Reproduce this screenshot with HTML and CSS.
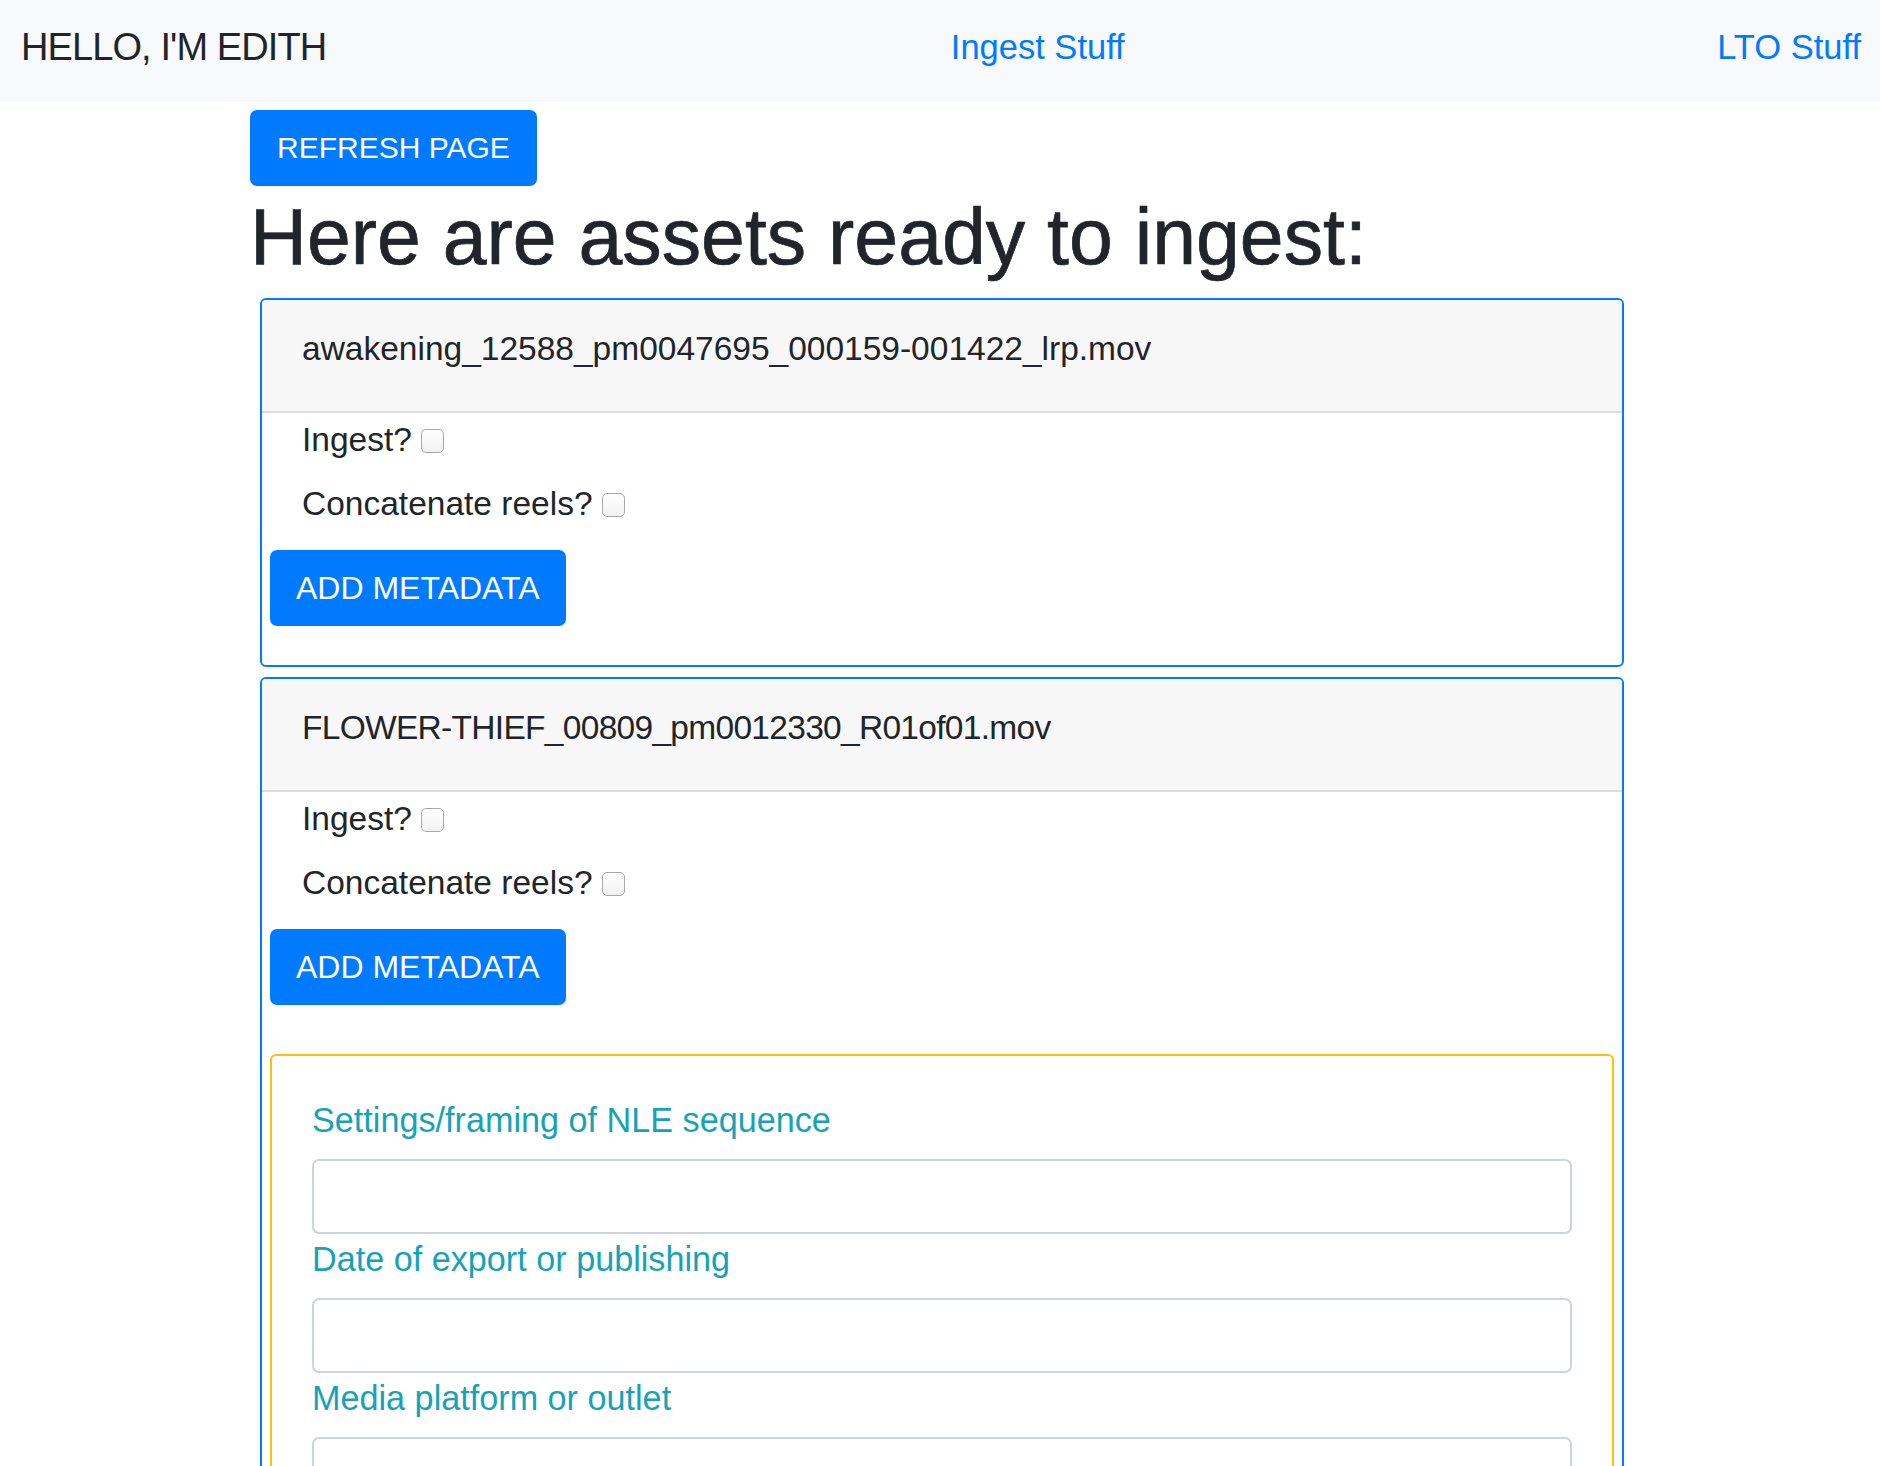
FILE: index.html
```html
<!DOCTYPE html>
<html lang="en">
<head>
<meta charset="utf-8">
<title>Edith</title>
<link rel="stylesheet" href="styles.css">
</head>
<body>
<nav class="navbar">
  <span class="brand">HELLO, I'M EDITH</span>
  <a class="nav-link nav-mid" href="#">Ingest Stuff</a>
  <a class="nav-link" href="#">LTO Stuff</a>
</nav>
<main class="container">
  <button class="btn">REFRESH PAGE</button>
  <h1 class="title">Here are assets ready to ingest:</h1>

  <section class="card">
    <div class="card-header">awakening_12588_pm0047695_000159-001422_lrp.mov</div>
    <div class="card-body">
      <label class="check-row">Ingest? <input type="checkbox" class="check"></label>
      <label class="check-row">Concatenate reels? <input type="checkbox" class="check"></label>
      <button class="btn btn-meta">ADD METADATA</button>
    </div>
  </section>

  <section class="card">
    <div class="card-header caps">FLOWER-THIEF_00809_pm0012330_R01of01.mov</div>
    <div class="card-body">
      <label class="check-row">Ingest? <input type="checkbox" class="check"></label>
      <label class="check-row">Concatenate reels? <input type="checkbox" class="check"></label>
      <button class="btn btn-meta">ADD METADATA</button>
      <div class="meta-card">
        <label class="field-label">Settings/framing of NLE sequence</label>
        <input type="text" class="field">
        <label class="field-label">Date of export or publishing</label>
        <input type="text" class="field">
        <label class="field-label">Media platform or outlet</label>
        <input type="text" class="field">
      </div>
    </div>
  </section>
</main>
</body>
</html>
```

FILE: styles.css
```css
* { box-sizing: border-box; }

html, body {
  margin: 0;
  padding: 0;
  background: #ffffff;
}

body {
  font-family: "Liberation Sans", Arial, sans-serif;
  font-size: 33.5px;
  line-height: 50px;
  color: #212529;
}

.navbar {
  height: 102px;
  background: #f8f9fa;
  display: flex;
  align-items: center;
  justify-content: space-between;
  padding: 0 19px 8px 21px;
}

.brand {
  font-size: 38px;
  letter-spacing: -0.9px;
  color: #212529;
  line-height: 50px;
}

.nav-link {
  font-size: 34.5px;
  color: #007bff;
  text-decoration: none;
  line-height: 50px;
}

.nav-mid {
  margin-left: 32px;
}

.container {
  width: 1380px;
  margin: 0 auto;
}

.btn {
  display: inline-flex;
  align-items: center;
  justify-content: center;
  height: 76px;
  padding: 0 27px;
  margin-top: 8px;
  border: none;
  border-radius: 7px;
  background: #007bff;
  color: #ffffff;
  font-family: "Liberation Sans", Arial, sans-serif;
  font-size: 30px;
  line-height: 1;
  cursor: pointer;
}

.title {
  margin: 4px 0 13px;
  font-size: 78.8px;
  line-height: 95px;
  font-weight: 400;
  -webkit-text-stroke: 0.7px #212529;
  color: #212529;
}

.card {
  margin: 0 6px 10px 10px;
  border: 2px solid #007bff;
  border-radius: 6px;
  overflow: hidden;
}

.card-header {
  background: #f7f7f7;
  padding: 24px 40px 37px;
  border-bottom: 2px solid #dcdcdc;
  line-height: 50px;
}

.card-header.caps {
  letter-spacing: -0.7px;
}

.card-body {
  padding: 2px 8px 39px;
  display: flex;
  flex-direction: column;
  align-items: flex-start;
}

.check-row {
  display: flex;
  align-items: center;
  gap: 9px;
  padding-left: 32px;
  line-height: 50px;
}

.check-row + .check-row {
  margin-top: 14px;
}

.check {
  -webkit-appearance: none;
  appearance: none;
  width: 23px;
  height: 24px;
  margin: 2px 0 0;
  border: 1.5px solid #a8a8a8;
  border-radius: 5px;
  background: linear-gradient(#ffffff, #f1f1f1);
}

.btn-meta {
  margin-top: 21px;
  padding: 0 26px;
  font-size: 32px;
}

.meta-card {
  align-self: stretch;
  margin-top: 49px;
  border: 2px solid #ffc107;
  border-radius: 6px;
  padding: 39px 40px 40px;
  display: flex;
  flex-direction: column;
}

.field-label {
  color: #17a2b8;
  font-size: 34.2px;
  line-height: 50px;
  margin-bottom: 14px;
}

.field {
  height: 75px;
  border: 2px solid #ced4da;
  border-radius: 7px;
  background: #ffffff;
  font-size: 30px;
  padding: 0 20px;
}
```
